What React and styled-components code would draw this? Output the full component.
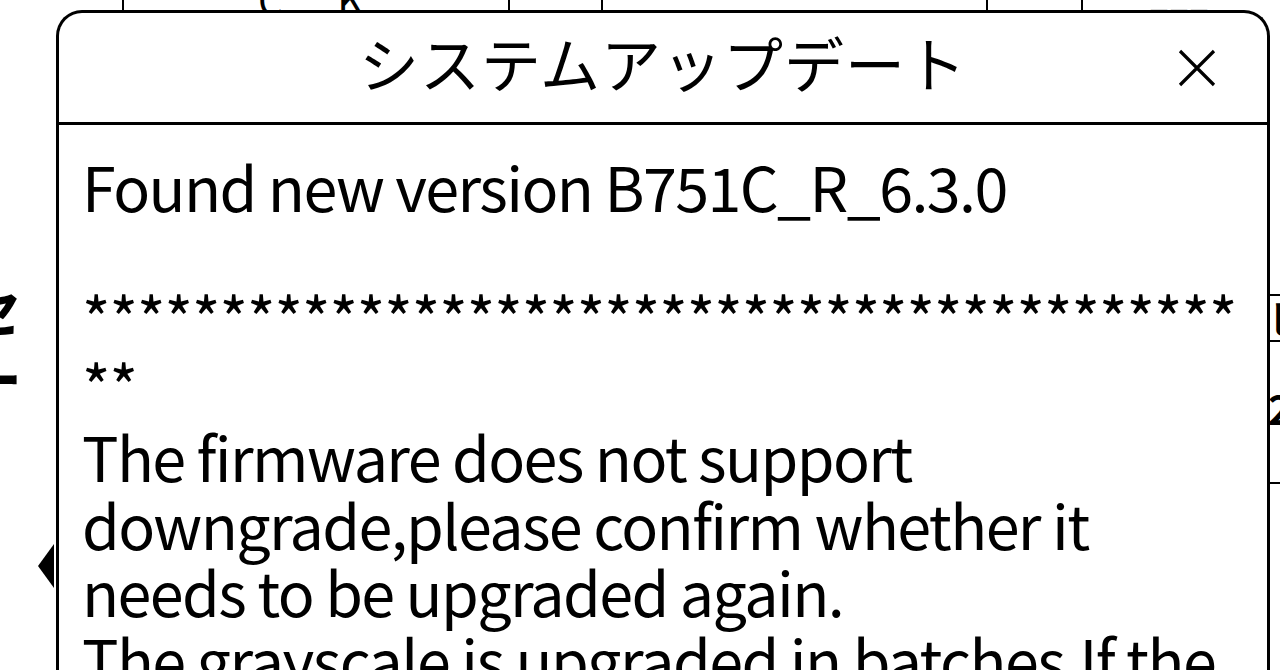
import React from "react";
import styled, { createGlobalStyle } from "styled-components";

const GlobalStyle = createGlobalStyle`
  html, body { margin: 0; padding: 0; background: #fff; }
  body {
    font-family: "Noto Sans CJK JP", "Noto Sans", sans-serif;
    color: #000;
    overflow: hidden;
  }
`;

const Page = styled.div`
  position: relative;
  width: 1280px;
  height: 670px;
  overflow: hidden;
  background: #fff;
  display: flex;
  flex-direction: column;
`;

const TopRow = styled.div`
  display: grid;
  grid-template-columns: 124px 386px 93px 385px 95px 1fr;
  height: 40px;
  flex: none;
`;

const Cell = styled.div`
  border-right: ${(p) => (p.$last ? "none" : "2px solid #000")};
  overflow: hidden;
  font-size: 40px;
  line-height: 40px;
  color: ${(p) => (p.$muted ? "#bbb" : "#000")};
  padding-left: ${(p) => p.$pad || 0}px;
  white-space: pre;
`;

const PeekText = styled.div`
  margin-top: -22px;
`;

const MainArea = styled.div`
  flex: 1;
  display: flex;
`;

const LeftRail = styled.div`
  width: 58px;
  display: flex;
  flex-direction: column;
  align-items: flex-end;
  overflow: hidden;
`;

const RailGlyphs = styled.div`
  align-self: flex-start;
  margin-left: -36px;
  margin-top: 232px;
  font-size: 58px;
  line-height: 70px;
  font-weight: 700;
`;

const Pointer = styled.svg`
  margin-top: 128px;
  margin-right: 2px;
  display: block;
`;

const Spacer = styled.div`
  flex: 1;
`;

const RightRail = styled.div`
  width: 16px;
  display: flex;
  flex-direction: column;
  overflow: hidden;
  padding-top: 254px;
`;

const RailRow = styled.div`
  height: ${(p) => p.$h}px;
  border-top: 2px solid #000;
  font-size: 40px;
  line-height: ${(p) => p.$lh || 40}px;
  padding-left: 4px;
  padding-top: ${(p) => p.$pt || 0}px;
  box-sizing: border-box;
  white-space: pre;
  font-weight: 700;
`;

const Dialog = styled.div`
  position: absolute;
  left: 56px;
  top: 10px;
  width: 1214px;
  height: 720px;
  box-sizing: border-box;
  border: 3px solid #000;
  border-bottom: none;
  border-radius: 26px 26px 0 0;
  background: #fff;
  display: flex;
  flex-direction: column;
`;

const Header = styled.div`
  height: 112px;
  flex: none;
  box-sizing: border-box;
  border-bottom: 3px solid #000;
  display: grid;
  grid-template-columns: 1fr auto 1fr;
  align-items: center;
`;

const Title = styled.h1`
  grid-column: 2;
  margin: 0 0 11px;
  font-size: 60px;
  font-weight: 400;
  line-height: 1;
  letter-spacing: 1px;
`;

const CloseButton = styled.button`
  grid-column: 3;
  justify-self: end;
  margin-right: 50px;
  margin-top: 0;
  padding: 0;
  border: none;
  background: none;
  width: 40px;
  height: 40px;
  display: flex;
  align-items: center;
  justify-content: center;
`;

const Body = styled.div`
  padding: 27px 20px 0 23px;
  font-size: 61px;
  line-height: 67.5px;
  letter-spacing: -1.6px;
  white-space: pre-wrap;
  overflow-wrap: anywhere;
`;

const Para = styled.p`
  margin: 0;
`;

const Stars = styled.p`
  margin: -4px 0 0;
  padding-bottom: 4px;
  letter-spacing: -1px;
`;

const stars = "*".repeat(44);

export default function App() {
  return (
    <>
      <GlobalStyle />
      <Page>
        <TopRow>
          <Cell />
          <Cell $pad={134}>
            <PeekText>C      K</PeekText>
          </Cell>
          <Cell />
          <Cell />
          <Cell />
          <Cell $last $muted $pad={66}>
            <PeekText>ﾆﾆﾆ</PeekText>
          </Cell>
        </TopRow>
        <MainArea>
          <LeftRail>
            <RailGlyphs>
              セ
              <br />ー
            </RailGlyphs>
            <Pointer width="18" height="52" viewBox="0 0 18 52">
              <polygon points="0,26 16,4 16,48" fill="#000" />
            </Pointer>
          </LeftRail>
          <Spacer />
          <RightRail>
            <RailRow $h={46} $lh={44}>ヒ</RailRow>
            <RailRow $h={142} $pt={46}>2</RailRow>
            <RailRow $h={120} />
          </RightRail>
        </MainArea>
        <Dialog>
          <Header>
            <Title>システムアップデート</Title>
            <CloseButton aria-label="close">
              <svg width="38" height="38" viewBox="0 0 38 38">
                <path d="M2 2 L36 36 M36 2 L2 36" stroke="#000" strokeWidth="3.2" fill="none" />
              </svg>
            </CloseButton>
          </Header>
          <Body>
            <Para>Found new version B751C_R_6.3.0</Para>
            <Para>{"\u00a0"}</Para>
            <Stars>{stars}</Stars>
            <Para>
              The firmware does not support downgrade,please confirm whether it needs to be upgraded again.
            </Para>
            <Para>
              The grayscale is upgraded in batches.If the upgrade fails, please try again later.
            </Para>
          </Body>
        </Dialog>
      </Page>
    </>
  );
}
